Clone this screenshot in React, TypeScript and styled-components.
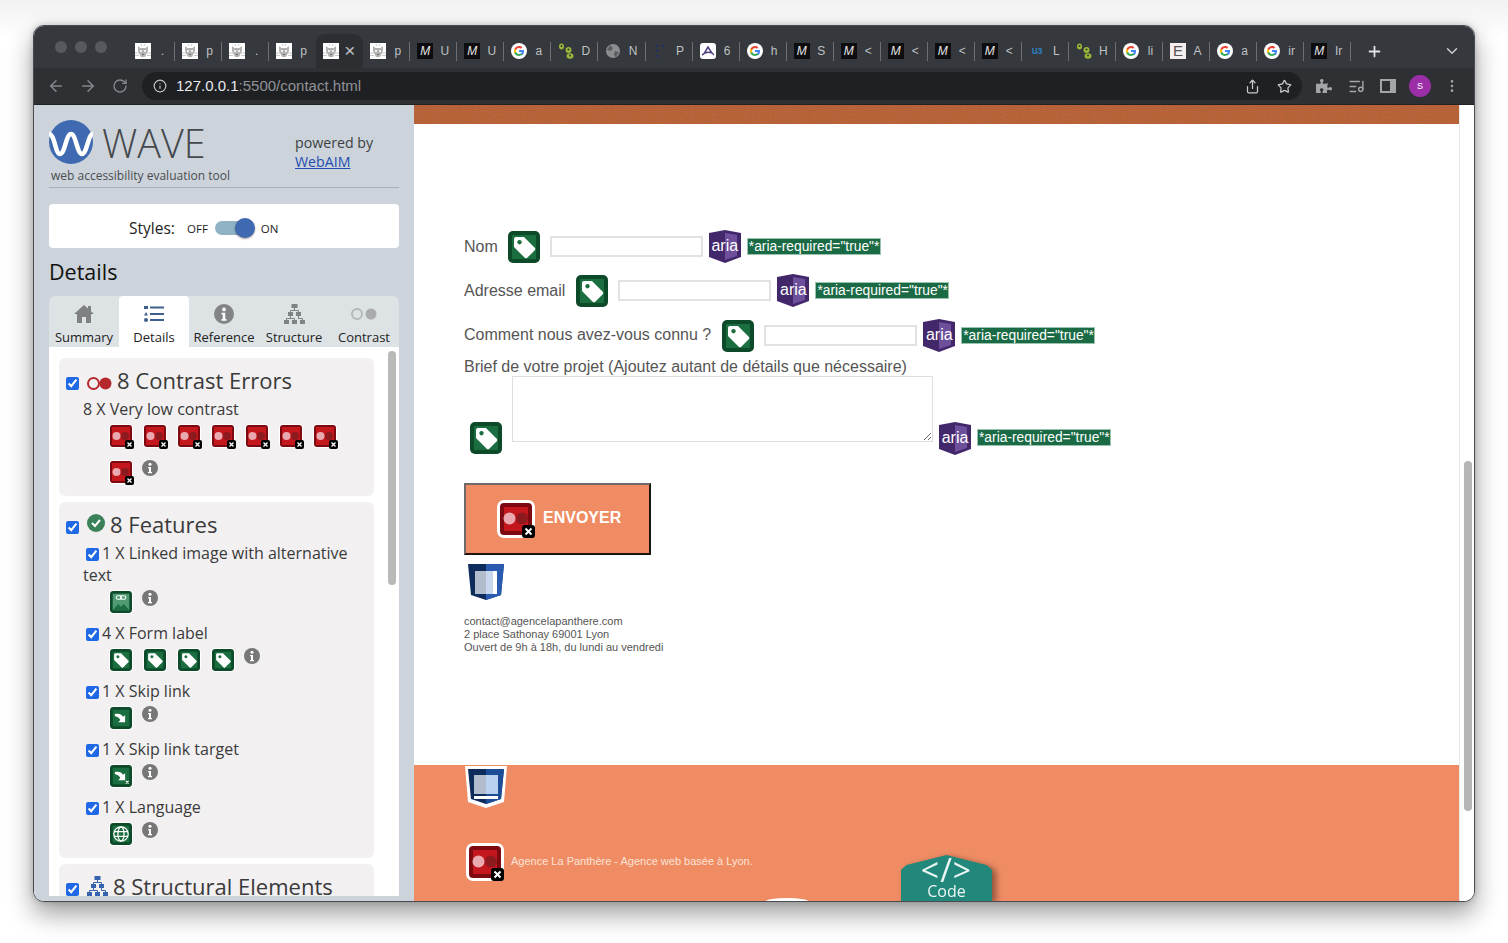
import React from 'react';
import styled, { createGlobalStyle } from 'styled-components';
import { ArrowLeft, ArrowRight, RotateCw, Info, Share, Star, ListMusic, Plus, ChevronDown, MoreVertical } from 'lucide-react';
import { FaPuzzlePiece } from 'react-icons/fa';

const Global = createGlobalStyle`
  html, body { margin: 0; padding: 0; background: #fff; height: 100%; }
  body { font-family: "Liberation Sans", Arial, sans-serif; overflow: hidden; }
  * { box-sizing: border-box; }
`;
const Desk = styled.div`
  width: 1508px; height: 943px; padding: 25px 33px 41px 33px; background: linear-gradient(#f1f1f1, #fff 4%);
`;
const Win = styled.div`
  width: 1442px; height: 877px; display: flex; flex-direction: column; overflow: hidden;
  border-radius: 11px; border: 1px solid #4a4c4f; background: #ccd3da;
  box-shadow: 0 12px 26px rgba(0,0,0,.38), 0 0 6px rgba(0,0,0,.2);
`;
const Strip = styled.div`
  height: 42px; flex: none; display: flex; background: #35383c; padding: 0 0 0 21px;
`;
const Lights = styled.div`
  width: 73px; flex: none; display: flex; gap: 8px; padding-top: 15px;
`;
const Light = styled.span`
  width: 12px; height: 12px; border-radius: 50%; background: #56595d;
`;
const TabRow = styled.div`
  display: flex; padding-top: 8px; align-items: stretch;
`;
const BTab = styled.div<{ $active?: boolean; $sep?: boolean }>`
  width: 47.06px; flex: none; height: 34px; display: flex; align-items: center; padding-left: 7px; position: relative;
  background: ${p => (p.$active ? '#2c2e31' : 'transparent')};
  border-radius: 9px 9px 0 0;
  &::after {
    content: ''; display: ${p => (p.$sep ? 'block' : 'none')};
    position: absolute; right: 0; top: 8px; height: 19px; width: 1px; background: #6b6e72;
  }
`;
const BTitle = styled.span<{ $active?: boolean }>`
  font-size: ${p => (p.$active ? '19px' : '12px')}; margin-left: ${p => (p.$active ? '2px' : '3px')}; color: #bfc1c4; width: 17px; overflow: hidden; white-space: nowrap; text-align: center;
  font-family: "Liberation Sans", sans-serif; line-height: ${p => (p.$active ? '22px' : '16px')};
`;
const Fav = styled.span<{ $bg: string; $fg?: string }>`
  width: 16px; height: 16px; flex: none; display: flex; align-items: center; justify-content: center;
  background: ${p => p.$bg}; color: ${p => p.$fg || '#fff'}; overflow: hidden;
  font-family: "Liberation Sans", sans-serif; font-size: 12px; line-height: 16px;
`;
const MFav = styled(Fav)` font-style: italic; font-size: 12px; color: #e4e4e4; `;
const EFav = styled(Fav)` font-size: 15px; color: #555; background: #f4eeee; `;
const UFav = styled(Fav)` font-size: 10px; font-weight: 700; color: #2f7fc0; letter-spacing: -0.5px; `;
const StripEnd = styled.div`
  flex: 1; display: flex; align-items: center; color: #d6d7d9; padding: 8px 13px 0 15px; justify-content: space-between;
`;
const EndIcon = styled.span`
  display: flex; color: #c8cacc;
`;
const Toolbar = styled.div`
  height: 37px; flex: none; background: #2e3033; display: flex; align-items: center; padding: 0 0 0 6px; color: #7d8084;
  border-bottom: 1px solid #222;
`;
const Nav = styled.span`
  width: 32px; flex: none; display: flex; justify-content: center; color: #85888c;
`;
const Omni = styled.div`
  margin-left: 6px; width: 1160px; flex: none; height: 28px; border-radius: 14px; background: #1f2023;
  display: flex; align-items: center; padding: 0 2px 0 11px; color: #c4c6c9;
`;
const Url = styled.div`
  margin: -2px 0 0 9px; font-size: 15px; color: #8f9296; flex: 1;
  & b { color: #e8eaed; font-weight: 400; }
`;
const OmniBtn = styled.span`
  width: 32px; display: flex; justify-content: center; color: #c5c7ca;
`;
const Tool = styled.span`
  width: 32px; flex: none; display: flex; justify-content: center; align-items: center; color: #a3a5a8;
`;
const Extensions = styled.div`
  display: flex; margin-left: 6px; align-items: center;
`;
const Avatar = styled.span`
  width: 22px; height: 22px; flex: none; border-radius: 50%; background: #9c2fa8; color: #fff; font-size: 9px; display: flex; align-items: center; justify-content: center;
  margin: 0 5px;
`;
const Content = styled.div`
  flex: 1; display: flex; min-height: 0; background: #fff;
`;
const Side = styled.aside`
  width: 380px; flex: none; background: #ccd3da; padding: 15px 15px 5px 15px; display: flex; flex-direction: column;
  font-family: "Open Sans", sans-serif; color: #333;
`;
const Head = styled.div`
  height: 68px; flex: none; display: flex; border-bottom: 1px solid #a9afb6;
`;
const LogoBlock = styled.div`
  width: 246px; flex: none;
`;
const LogoRow = styled.div`
  display: flex; align-items: center; height: 44px;
`;
const WaveWord = styled.span`
  font-size: 39.5px; font-weight: 300; margin: 2px 0 0 9px; color: #45484c; line-height: 38px;
`;
const Tagline = styled.div`
  font-size: 12px; color: #4a4d50; margin: 4px 0 0 2px; line-height: 16px;
`;
const Powered = styled.div`
  font-size: 14.2px; line-height: 19px; margin-top: 13px; color: #3c3f42;
  & a { color: #1f4fb0; text-decoration: underline; display: block; }
`;
const StyleCard = styled.div`
  height: 44px; flex: none; margin-top: 16px; border-radius: 4px; background: #fff; display: flex; align-items: center; padding: 4px 0 0 80px; color: #222;
`;
const StyleLabel = styled.span`
  font-size: 15.5px; width: 58px; margin-top: -1px;
`;
const OnOff = styled.span`
  font-size: 11.5px; color: #222;
`;
const Track = styled.span`
  width: 39px; height: 14px; border-radius: 7px; background: #8fb3c4; margin: 0 7px 0 7px; position: relative; display: block;
`;
const Knob = styled.span`
  position: absolute; right: -1px; top: -3px; width: 20px; height: 20px; border-radius: 50%; background: #3f69b0; box-shadow: 0 1px 2px rgba(0,0,0,.4);
`;
const H2 = styled.h2`
  margin: 9px 0 9px; font-size: 21.5px; font-weight: 400; line-height: 30px; height: 30px; color: #111;
`;
const WTabs = styled.div`
  height: 51px; flex: none; display: flex; background: #dde2e5; border-radius: 6px 6px 0 0;
`;
const WTab = styled.div<{ $active?: boolean }>`
  width: 70px; flex: none; display: flex; flex-direction: column; align-items: center; padding-top: 6px;
  background: ${p => (p.$active ? '#fff' : 'transparent')}; border-radius: 4px 4px 0 0;
  font-size: 13px; color: #222; line-height: 18px; white-space: nowrap;
`;
const WTabIcon = styled.span`
  height: 23px; margin-bottom: 3px; display: flex; align-items: center; justify-content: center;
`;
const Panel = styled.div`
  flex: 1; min-height: 0; overflow: hidden; background: #fff; display: flex; padding: 11px 0 0 10px;
`;
const CardCol = styled.div`
  width: 315px; flex: none; display: flex; flex-direction: column; gap: 6px;
`;
const Card = styled.section`
  background: #f2f0f1; border-radius: 6px; padding: 8px 0 13px 7px; flex: none;
`;
const CardHead = styled.div`
  display: flex; align-items: center; font-size: 22px; line-height: 30px; height: 30px; padding-bottom: 2px; color: #3a3a3a;
  & input { margin: 6px 8px 0 0; }
`;
const Box = styled.input.attrs({ type: 'checkbox', defaultChecked: true })`
  width: 13px; height: 13px; accent-color: #1f68e6; flex: none;
`;
const HeadIcon = styled.span<{ $mt?: number }>`
  display: flex; margin: ${p => p.$mt || 0}px 5px 0 0; flex: none;
`;
const Line = styled.div`
  margin: 2px 0 0 17px; font-size: 16px; line-height: 22px; color: #3a3a3a;
`;
const Item = styled.div`
  padding-left: 17px; margin-top: 2px;
  & + & { margin-top: 9px; }
`;
const ItemText = styled.div`
  font-size: 16px; line-height: 22px; color: #3a3a3a; width: 285px;
  & input { margin: 0 3px 0 3px; vertical-align: -2px; }
`;
const IconWrap = styled.div`
  margin: 5px 0 0 27px; display: flex; flex-wrap: wrap; row-gap: 14px; width: 250px;
`;
const IconsTight = styled(IconWrap)`
  margin-left: 44px;
`;
const Spot = styled.span`
  display: block; width: 34px; height: 22px; flex: none;
`;
const InfoSpot = styled.span`
  display: block; width: 16px; height: 16px; margin: -1px 0 0 -2px; flex: none;
`;
const PanelBar = styled.div`
  width: 15px; margin-left: 10px; flex: none; padding: 0 3px 0 4px; margin-top: -7px; background: #fff; border-left: 0;
`;
const PanelThumb = styled.div`
  width: 8px; height: 234px; border-radius: 4px; background: #b9b9b9;
`;
const Site = styled.main`
  flex: 1; min-width: 0; display: flex; flex-direction: column; color: #555;
`;
const Band = styled.div`
  height: 19px; flex: none; background-color: #bd6338; overflow: hidden;
`;
const FormArea = styled.div`
  height: 641px; flex: none; padding: 106px 0 0 50px; background: #fff;
`;
const Row = styled.div<{ $mt?: number }>`
  display: flex; align-items: center; height: 33px; margin-top: ${p => p.$mt || 0}px;
`;
const Lab = styled.label<{ $mr?: number; $up?: number }>`
  font-size: 16px; color: #555; margin-right: ${p => p.$mr ?? 10}px; white-space: nowrap; margin-top: ${p => -(p.$up || 0)}px;
`;
const Field = styled.input`
  width: 153px; height: 21px; border: 2px solid #e2e2e2; margin: 0 6px 0 10px; background: #fff; padding: 0;
`;
const AriaBadge = styled.span<{ $mt?: number }>`
  width: 32px; height: 33px; display: block; position: relative; flex: none; margin-top: ${p => p.$mt || 0}px;
`;
const AriaText = styled.span`
  position: absolute; left: 0; right: 0; top: 7px; text-align: center; color: #fff; font-size: 16px; line-height: 18px;
`;
const Req = styled.span<{ $mt?: number }>`
  margin-left: 6px; height: 17px; width: 134px; background: #1a6b45; color: #fff; border: 1px solid #9cc2b0; font-size: 13.8px; line-height: 15px; padding-left: 1px; white-space: nowrap; flex: none;
  margin-top: ${p => p.$mt || 0}px; overflow: hidden;
`;
const BriefLabel = styled.div`
  font-size: 16px; line-height: 18px; margin-top: 6px; height: 18px; color: #555;
`;
const BriefRow = styled.div`
  display: flex; align-items: flex-start; padding-left: 6px; height: 79px;
`;
const BriefTag = styled.span`
  display: block; margin-top: 46px; width: 32px; height: 32px; flex: none;
`;
const Area = styled.textarea`
  width: 421px; height: 66px; border: 1px solid #dedede; margin: 0 6px 0 10px; flex: none; padding: 0; background: #fff;
`;
const Send = styled.button`
  margin-top: 28px; width: 187px; height: 72px; background: #ef8c64; color: #fff; font: 700 16px "Liberation Sans", sans-serif;
  border: 2px solid; border-color: #6f6a69 #201412 #201412 #6f6a69; display: flex; align-items: center; padding: 0 0 0 31px; gap: 8px;
`;
const SendText = styled.span`
  margin-top: -2px;
`;
const ErrSpot = styled.span`
  display: block; width: 38px; height: 38px; flex: none;
`;
const Shield = styled.span`
  display: block; margin: 9px 0 0 4px; width: 36px; height: 36px;
`;
const Address = styled.address`
  font-style: normal; font-size: 11px; line-height: 13px; margin-top: 15px; color: #555;
`;
const Foot = styled.footer`
  flex: 1; background: #ef8c64; position: relative; padding: 1px 0 0 51px; overflow: hidden;
`;
const FootShield = styled.span`
  display: block; width: 42px; height: 42px;
`;
const FootRow = styled.div`
  display: flex; align-items: center; margin: 35px 0 0 1px; gap: 7px;
  color: #fde3d6; font-size: 11px;
`;
const FootText = styled.span`
  margin-top: -2px;
`;
const CodeShadow = styled.div`
  position: absolute; left: 487px; bottom: 0; width: 91px; height: 46px; filter: drop-shadow(4px 2px 3px rgba(0,0,0,.4));
`;
const CodeTab = styled.div`
  width: 100%; height: 100%; background: #23887c; color: #eaf6f3; text-align: center; font-family: "Open Sans", sans-serif;
  clip-path: polygon(0 100%, 0 32%, 6% 22%, 50% 0, 94% 22%, 100% 32%, 100% 100%);
`;
const CodeGlyph = styled.div`
  font-size: 32px; line-height: 26px; padding-top: 2px; height: 28px; letter-spacing: 1px;
`;
const CodeLabel = styled.div`
  font-size: 16px; line-height: 16px;
`;
const Arc = styled.div`
  position: absolute; left: 352px; bottom: 0; width: 42px; height: 3px; border-radius: 50% 50% 0 0 / 100% 100% 0 0; background: #fff;
`;
const SiteBar = styled.div`
  width: 15px; flex: none; padding: 356px 3px 0 4px; border-left: 1px solid #e8e8e8; background: #fff;
`;
const SiteThumb = styled.div`
  width: 8px; height: 350px; border-radius: 4px; background: #b5b5b5;
`;

/* ---------- drawings ---------- */
const Noise = () => (
  <svg width="1045" height="19" style={{ display: 'block' }}>
    <filter id="grain" x="0" y="0" width="100%" height="100%"><feTurbulence type="fractalNoise" baseFrequency="0.9" numOctaves="2" seed="4" /><feColorMatrix values="0 0 0 0 0.35  0 0 0 0 0.12  0 0 0 0 0.05  2.2 0 0 0 -0.95" /></filter>
    <rect width="1045" height="19" filter="url(#grain)" />
  </svg>
);
const Panther = () => (
  <svg width="16" height="16" viewBox="0 0 16 16"><rect width="16" height="16" fill="#fff" />
    <path d="M3 3l2.500 2h5L13 3v5l-1.500 3L10 14H6l-1.500-3L3 8z" fill="#b3b3b3" /><circle cx="6" cy="8" r="1.100" fill="#fff" /><circle cx="10" cy="8" r="1.100" fill="#fff" /><path d="M7 11.500h2" stroke="#666" /><path d="M0 10h4M0 12.500h4M12 10h4M12 12.500h4M6 1l1 2M10 1L9 3" stroke="#bbb" strokeWidth=".8" />
  </svg>
);
const GoogleG = () => (
  <svg width="16" height="16" viewBox="0 0 16 16"><circle cx="8" cy="8" r="8" fill="#fff" />
    <path d="M13 8.100c0-.4 0-.7-.1-1H8v2h2.800c-.1.700-.5 1.200-1 1.600v1.300h1.700c1-.9 1.500-2.200 1.500-3.900z" fill="#4285F4" />
    <path d="M8 13c1.400 0 2.500-.5 3.400-1.200l-1.700-1.300c-.5.300-1 .5-1.700.5-1.300 0-2.400-.9-2.800-2.100H3.500v1.300C4.300 11.900 6 13 8 13z" fill="#34A853" />
    <path d="M5.200 8.900c-.2-.6-.2-1.200 0-1.800V5.800H3.500a5 5 0 0 0 0 4.400z" fill="#FBBC05" />
    <path d="M8 5c.8 0 1.400.3 1.900.8l1.500-1.500C10.500 3.500 9.400 3 8 3 6 3 4.300 4.100 3.500 5.800l1.700 1.300C5.600 5.900 6.700 5 8 5z" fill="#EA4335" />
  </svg>
);
const Seeds = () => (
  <svg width="16" height="16" viewBox="0 0 16 16"><g fill="#9ab93a"><ellipse cx="3.500" cy="3.500" rx="2.500" ry="3" /><ellipse cx="10.500" cy="7" rx="3" ry="3" /><ellipse cx="12" cy="13" rx="3.500" ry="2.800" /></g><circle cx="3.500" cy="3" r="1" fill="#35383c" /><circle cx="10.500" cy="6.500" r="1" fill="#35383c" /><circle cx="12" cy="12.500" r="1" fill="#35383c" /></svg>
);
const GlobeFav = () => (
  <svg width="16" height="16" viewBox="0 0 16 16"><circle cx="8" cy="8" r="7" fill="#8b8e91" /><path d="M5 2l3 3-2 3-4-1zM10 8l4 1-3 5-2-2z" fill="#5b5e61" /></svg>
);
const DotsFav = () => (
  <svg width="16" height="16" viewBox="0 0 16 16"><g fill="#1d2f63"><rect x="3" y="2" width="2" height="2" /><rect x="9" y="2" width="2" height="2" /><rect x="3" y="7" width="2" height="2" /><rect x="3" y="12" width="2" height="2" /></g></svg>
);
const PeakFav = () => (
  <svg width="16" height="16" viewBox="0 0 16 16"><rect width="16" height="16" rx="3" fill="#fff" /><path d="M2 12c3-1 4-5 6-8 2 3 3 6 6 8M5 10c3-1 5-1 7 0" stroke="#51407f" strokeWidth="1.500" fill="none" /></svg>
);
const WaveLogo = () => (
  <svg width="44" height="44" viewBox="0 0 44 44"><circle cx="22" cy="22" r="22" fill="#3f69b0" />
    <path d="M0 14c6 0 6 20 11 20s6-20 11-20 6 20 11 20 6-20 11-20" stroke="#fff" strokeWidth="4.500" fill="none" /></svg>
);
const Err = ({ s = 22 }: { s?: number }) => (
  <svg width={s + (s < 30 ? 6 : 0)} height={s + (s < 30 ? 6 : 0)} viewBox={s < 30 ? '0 0 28 28' : '0 0 38 38'} style={{ display: 'block', overflow: 'visible' }}>
    {s < 30 ? (
      <>
        <rect x="-1" y="-1" width="24" height="24" rx="4" fill="#fff" />
        <rect width="22" height="22" rx="3" fill="#7c0a10" />
        <rect x="2" y="2" width="18" height="18" fill="#c4171d" />
        <circle cx="6.500" cy="11" r="4" fill="#eaa9ae" />
        <circle cx="15" cy="11" r="4" fill="#8c1a1f" />
        <rect x="15" y="15" width="9" height="9" rx="2" fill="#000" />
        <path d="M17.500 17.500l4 4M21.500 17.500l-4 4" stroke="#fff" strokeWidth="1.300" />
      </>
    ) : (
      <>
        <rect width="38" height="38" rx="7" fill="#fff" />
        <rect x="3" y="3" width="32" height="32" rx="4" fill="#7c0a10" />
        <rect x="7" y="7" width="24" height="24" fill="#c4171d" />
        <circle cx="12.500" cy="18.500" r="6" fill="#eaa9ae" />
        <circle cx="25" cy="18.500" r="6" fill="#8c1a1f" />
        <rect x="25" y="25" width="13" height="13" rx="3" fill="#000" />
        <path d="M28.500 28.500l6 6M34.500 28.500l-6 6" stroke="#fff" strokeWidth="2" />
      </>
    )}
  </svg>
);
const GreenBase = ({ s, children, ring }: { s: number; children: React.ReactNode; ring?: boolean }) => (
  <svg width={s} height={s} viewBox="0 0 32 32" style={{ display: 'block', overflow: 'visible' }}>
    {ring && <rect x="-1.500" y="-1.500" width="35" height="35" rx="6" fill="#fff" />}
    <rect width="32" height="32" rx="5" fill="#0d4a2a" />
    <rect x="4" y="4" width="24" height="24" fill="#1b6e3f" />
    {children}
  </svg>
);
const tagPath = <path fillRule="evenodd" d="M6 8a2 2 0 0 1 2-2h8l11 11a2 2 0 0 1 0 2l-8 8a2 2 0 0 1-2 0L6 16zM11.500 9a2.200 2.200 0 1 0 .01 0z" fill="#fff" />;
const Tag = ({ s = 32, ring }: { s?: number; ring?: boolean }) => <GreenBase s={s} ring={ring}>{tagPath}</GreenBase>;
const Skip = ({ x }: { x?: boolean }) => (
  <GreenBase s={22} ring>
    <path d="M7 10c6-1 10 0 12 4l3-2v10H12l3-3c-1-3-4-5-8-6z" fill="#fff" />
    {x && <path d="M23 23l4 4M27 23l-4 4" stroke="#fff" strokeWidth="1.500" />}
  </GreenBase>
);
const LinkedImg = () => (
  <GreenBase s={22} ring>
    <rect x="4" y="4" width="24" height="24" fill="#4f9a72" />
    <path d="M4 28l8-9 4 4 4-4 8 9z" fill="#1b6e3f" />
    <rect x="9" y="7" width="8" height="5" rx="2.500" fill="none" stroke="#fff" strokeWidth="1.500" />
    <rect x="15" y="7" width="8" height="5" rx="2.500" fill="none" stroke="#fff" strokeWidth="1.500" />
  </GreenBase>
);
const Lang = () => (
  <GreenBase s={22} ring>
    <g fill="none" stroke="#fff" strokeWidth="1.800"><circle cx="16" cy="16" r="10.500" /><ellipse cx="16" cy="16" rx="4.500" ry="10.500" /><path d="M6 12.500h20M6 19.500h20" /></g>
  </GreenBase>
);
const InfoDot = ({ c = '#777', s = 16 }: { c?: string; s?: number }) => (
  <svg width={s} height={s} viewBox="0 0 16 16" style={{ display: 'block' }}><circle cx="8" cy="8" r="8" fill={c} /><circle cx="8" cy="4.300" r="1.500" fill="#fff" /><path d="M6 7h3v5h1v1.300H6V12h1V8.300H6z" fill="#fff" /></svg>
);
const Info16 = () => <InfoSpot><InfoDot /></InfoSpot>;
const Tree = ({ c, w = 21, h = 20 }: { c: string; w?: number; h?: number }) => (
  <svg width={w} height={h} viewBox="0 0 21 20" style={{ display: 'block' }}>
    <g fill={c}><rect x="7.500" y="0" width="6" height="4" /><rect x="4" y="8" width="5" height="4" /><rect x="12" y="8" width="5" height="4" /><rect x="0" y="16" width="5" height="4" /><rect x="8" y="16" width="5" height="4" /><rect x="16" y="16" width="5" height="4" /></g>
    <path d="M10.500 4v2.500M6.500 8V6.500h8V8M6.500 12v2.500h-4V16M6.500 14.500h4V16M14.500 12v2.500h4V16" stroke={c} fill="none" />
  </svg>
);
const Circles = ({ a, b, w, r }: { a: string; b: string; w: number; r: number }) => (
  <svg width={w} height={r * 2 + 2} viewBox={`0 0 ${w} ${r * 2 + 2}`} style={{ display: 'block' }}>
    <circle cx={r + 1} cy={r + 1} r={r} fill="none" stroke={a} strokeWidth="2" />
    <circle cx={w - r - 1} cy={r + 1} r={r + .5} fill={b} />
  </svg>
);
const Home = () => (
  <svg width="20" height="18" viewBox="0 0 20 18"><path d="M10 0L0 9h3v9h5v-6h4v6h5V9h3l-3-2.700V1h-3v2.600z" fill="#7f8183" /></svg>
);
const ListIcon = () => (
  <svg width="20" height="18" viewBox="0 0 20 18"><g fill="#3f5f8e"><rect x="0" y="1" width="4" height="3" /><path d="M2 7l2 3.500H0z" /><circle cx="2" cy="15" r="2" /><rect x="6" y="1.500" width="14" height="2" /><rect x="6" y="8" width="14" height="2" /><rect x="6" y="14" width="14" height="2" /></g></svg>
);
const AriaShape = () => (
  <svg width="32" height="33" viewBox="0 0 32 33" style={{ display: 'block' }}>
    <path d="M0 3l16-3 16 3v24l-16 6-16-6z" fill="#43276b" />
    <path d="M16 3l12 2v21l-12 4z" fill="#6d4f9c" />
  </svg>
);
const Aria = ({ mt }: { mt?: number }) => (
  <AriaBadge $mt={mt}><AriaShape /><AriaText>aria</AriaText></AriaBadge>
);
const ShieldDark = () => (
  <svg width="36" height="36" viewBox="0 0 36 36" style={{ display: 'block' }}>
    <path d="M0 0h36l-3 31-15 5-15-5z" fill="#0d2c5c" />
    <path d="M18 0h18l-3 31-15 5z" fill="#2a5bb0" />
    <rect x="7" y="7" width="11" height="23" fill="#b1bccd" />
    <rect x="18" y="7" width="7" height="23" fill="#c8d6ee" />
    <rect x="25" y="7" width="4" height="23" fill="#fff" />
  </svg>
);
const ShieldLight = () => (
  <svg width="42" height="42" viewBox="0 0 42 42" style={{ display: 'block' }}>
    <path d="M0 0h42l-3 36-18 6-18-6z" fill="#fff" />
    <path d="M3 3h36l-3 30-15 5-15-5z" fill="#0d2c5c" />
    <path d="M21 3h18l-3 30-15 5z" fill="#1d4d97" />
    <rect x="9" y="9" width="12" height="19" fill="#b1bccd" />
    <rect x="21" y="9" width="12" height="19" fill="#b9d0ee" />
    <rect x="9" y="30" width="24" height="3" fill="#fff" />
  </svg>
);
const SidePanelIcon = () => (
  <svg width="16" height="14" viewBox="0 0 16 14"><rect x="1" y="1" width="14" height="12" fill="none" stroke="#a3a5a8" strokeWidth="2" /><rect x="10" y="1" width="5" height="12" fill="#a3a5a8" /></svg>
);

type TabSpec = { k: 'p' | 'm' | 'g' | 's' | 'w' | 'd' | 'a' | 'e' | 'u'; t: string };
const tabs: TabSpec[] = [
  { k: 'p', t: '.' }, { k: 'p', t: 'p' }, { k: 'p', t: '.' }, { k: 'p', t: 'p' }, { k: 'p', t: '×' }, { k: 'p', t: 'p' },
  { k: 'm', t: 'U' }, { k: 'm', t: 'U' }, { k: 'g', t: 'a' }, { k: 's', t: 'D' }, { k: 'w', t: 'N' }, { k: 'd', t: 'P' },
  { k: 'a', t: '6' }, { k: 'g', t: 'h' }, { k: 'm', t: 'S' }, { k: 'm', t: '<' }, { k: 'm', t: '<' }, { k: 'm', t: '<' },
  { k: 'm', t: '<' }, { k: 'u', t: 'L' }, { k: 's', t: 'H' }, { k: 'g', t: 'li' }, { k: 'e', t: 'A' }, { k: 'g', t: 'a' },
  { k: 'g', t: 'ir' }, { k: 'm', t: 'Ir' },
];
const favicon = (k: TabSpec['k']) => {
  switch (k) {
    case 'p': return <Panther />;
    case 'g': return <GoogleG />;
    case 's': return <Seeds />;
    case 'w': return <GlobeFav />;
    case 'd': return <DotsFav />;
    case 'a': return <PeakFav />;
    case 'm': return <MFav $bg="#0d0d0f">M</MFav>;
    case 'e': return <EFav $bg="#f4eeee">E</EFav>;
    default: return <UFav $bg="transparent">uɜ</UFav>;
  }
};

const Features = ({ label, children }: { label: string; children: React.ReactNode }) => (
  <Item>
    <ItemText><Box />{label}</ItemText>
    <IconWrap>{children}</IconWrap>
  </Item>
);

export default function App() {
  return (
    <>
      <Global />
      <Desk>
        <Win>
          <Strip>
            <Lights><Light /><Light /><Light /></Lights>
            <TabRow>
              {tabs.map((t, i) => (
                <BTab key={i} $active={i === 4} $sep={i !== 3 && i !== 4}>
                  {favicon(t.k)}
                  <BTitle $active={i === 4}>{t.t}</BTitle>
                </BTab>
              ))}
            </TabRow>
            <StripEnd>
              <EndIcon><Plus size={17} strokeWidth={2.5} color="#e2e3e5" /></EndIcon>
              <EndIcon><ChevronDown size={18} /></EndIcon>
            </StripEnd>
          </Strip>
          <Toolbar>
            <Nav><ArrowLeft size={18} /></Nav>
            <Nav><ArrowRight size={18} /></Nav>
            <Nav><RotateCw size={16} /></Nav>
            <Omni>
              <Info size={14} />
              <Url><b>127.0.0.1</b>:5500/contact.html</Url>
              <OmniBtn><Share size={15} /></OmniBtn>
              <OmniBtn><Star size={15} /></OmniBtn>
            </Omni>
            <Extensions>
              <Tool><FaPuzzlePiece size={16} /></Tool>
              <Tool><ListMusic size={17} /></Tool>
              <Tool><SidePanelIcon /></Tool>
              <Avatar>S</Avatar>
              <Tool><MoreVertical size={16} /></Tool>
            </Extensions>
          </Toolbar>
          <Content>
            <Side>
              <Head>
                <LogoBlock>
                  <LogoRow><WaveLogo /><WaveWord>WAVE</WaveWord></LogoRow>
                  <Tagline>web accessibility evaluation tool</Tagline>
                </LogoBlock>
                <Powered>powered by<a href="#w">WebAIM</a></Powered>
              </Head>
              <StyleCard>
                <StyleLabel>Styles:</StyleLabel>
                <OnOff>OFF</OnOff>
                <Track><Knob /></Track>
                <OnOff>ON</OnOff>
              </StyleCard>
              <H2>Details</H2>
              <WTabs>
                <WTab><WTabIcon><Home /></WTabIcon>Summary</WTab>
                <WTab $active><WTabIcon><ListIcon /></WTabIcon>Details</WTab>
                <WTab><WTabIcon><InfoDot c="#828486" s={20} /></WTabIcon>Reference</WTab>
                <WTab><WTabIcon><Tree c="#808285" /></WTabIcon>Structure</WTab>
                <WTab><WTabIcon><Circles a="#b5b7b9" b="#a9abad" w={26} r={5} /></WTabIcon>Contrast</WTab>
              </WTabs>
              <Panel>
                <CardCol>
                  <Card>
                    <CardHead><Box /><HeadIcon $mt={6}><Circles a="#b5282e" b="#b5282e" w={25} r={5.5} /></HeadIcon>8 Contrast Errors</CardHead>
                    <Line>8 X Very low contrast</Line>
                    <IconsTight>
                      {Array.from({ length: 8 }).map((_, i) => <Spot key={i}><Err /></Spot>)}
                      <Info16 />
                    </IconsTight>
                  </Card>
                  <Card>
                    <CardHead><Box /><HeadIcon $mt={-2}>
                      <svg width="18" height="18" viewBox="0 0 18 18"><circle cx="9" cy="9" r="9" fill="#3a8159" /><path d="M5 9l3 3 5-6" stroke="#fff" strokeWidth="2" fill="none" /></svg>
                    </HeadIcon>8 Features</CardHead>
                    <Features label="1 X Linked image with alternative text"><Spot><LinkedImg /></Spot><Info16 /></Features>
                    <Features label="4 X Form label">
                      {[0, 1, 2, 3].map(i => <Spot key={i}><Tag s={22} ring /></Spot>)}<Info16 />
                    </Features>
                    <Features label="1 X Skip link"><Spot><Skip /></Spot><Info16 /></Features>
                    <Features label="1 X Skip link target"><Spot><Skip x /></Spot><Info16 /></Features>
                    <Features label="1 X Language"><Spot><Lang /></Spot><Info16 /></Features>
                  </Card>
                  <Card>
                    <CardHead><Box /><HeadIcon><Tree c="#3563ad" /></HeadIcon>8 Structural Elements</CardHead>
                  </Card>
                </CardCol>
                <PanelBar><PanelThumb /></PanelBar>
              </Panel>
            </Side>
            <Site>
              <Band><Noise /></Band>
              <FormArea>
                <Row><Lab>Nom</Lab><Tag /><Field /><Aria /><Req>*aria-required="true"*</Req></Row>
                <Row $mt={11}><Lab $mr={11}>Adresse email</Lab><Tag /><Field /><Aria /><Req>*aria-required="true"*</Req></Row>
                <Row $mt={12}><Lab $mr={11} $up={1}>Comment nous avez-vous connu ?</Lab><Tag /><Field /><Aria /><Req>*aria-required="true"*</Req></Row>
                <BriefLabel>Brief de votre projet (Ajoutez autant de détails que nécessaire)</BriefLabel>
                <BriefRow>
                  <BriefTag><Tag /></BriefTag>
                  <Area />
                  <Aria mt={46} />
                  <Req $mt={53}>*aria-required="true"*</Req>
                </BriefRow>
                <Send><ErrSpot><Err s={38} /></ErrSpot><SendText>ENVOYER</SendText></Send>
                <Shield><ShieldDark /></Shield>
                <Address>
                  contact@agencelapanthere.com<br />
                  2 place Sathonay 69001 Lyon<br />
                  Ouvert de 9h à 18h, du lundi au vendredi
                </Address>
              </FormArea>
              <Foot>
                <FootShield><ShieldLight /></FootShield>
                <FootRow><ErrSpot><Err s={38} /></ErrSpot><FootText>Agence La Panthère - Agence web basée à Lyon.</FootText></FootRow>
                <Arc />
                <CodeShadow>
                  <CodeTab>
                    <CodeGlyph>&lt;/&gt;</CodeGlyph>
                    <CodeLabel>Code</CodeLabel>
                  </CodeTab>
                </CodeShadow>
              </Foot>
            </Site>
            <SiteBar><SiteThumb /></SiteBar>
          </Content>
        </Win>
      </Desk>
    </>
  );
}
